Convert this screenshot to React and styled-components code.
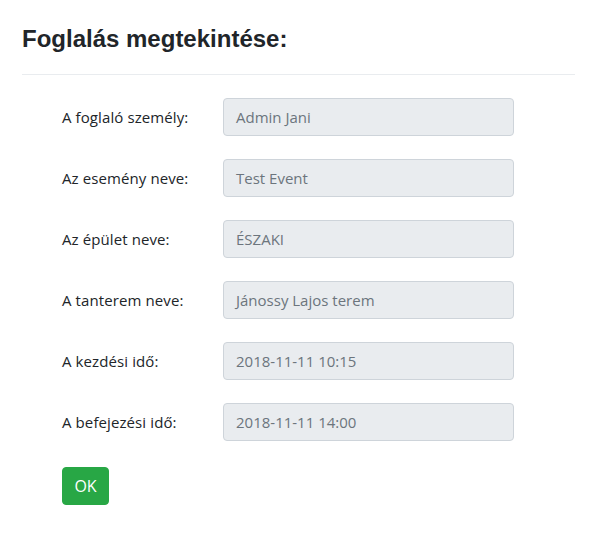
import React from "react";
import styled, { createGlobalStyle } from "styled-components";

const GlobalStyle = createGlobalStyle`
  body {
    margin: 0;
    background: #fff;
    font-family: "Open Sans", "Noto Sans", sans-serif;
    color: #212529;
  }
`;

const Page = styled.div`
  padding: 0 22px;
`;

const Title = styled.h2`
  margin: 0;
  padding-top: 26px;
  padding-bottom: 22px;
  font-family: "Liberation Sans", Arial, sans-serif;
  font-weight: 700;
  font-size: 24px;
  line-height: 26px;
  color: #212529;
  border-bottom: 1px solid #e9ecef;
`;

const Form = styled.div`
  padding: 23px 40px 0;
  display: flex;
  flex-direction: column;
  gap: 23px;
`;

const Row = styled.div`
  display: grid;
  grid-template-columns: 161px 291px;
  align-items: center;
`;

const Label = styled.label`
  font-size: 15px;
  letter-spacing: 0.1px;
  color: #212529;
`;

const Field = styled.div`
  height: 38px;
  box-sizing: border-box;
  padding: 0 12px;
  display: flex;
  align-items: center;
  background: #e9ecef;
  border: 1px solid #ced4da;
  border-radius: 4px;
  font-size: 15px;
  color: #6c757d;
`;

const Button = styled.button`
  margin-top: 3px;
  align-self: flex-start;
  height: 38px;
  width: 47px;
  padding: 0;
  border: 1px solid #28a745;
  border-radius: 4px;
  background: #28a745;
  color: #fff;
  font-family: "Open Sans", "Noto Sans", sans-serif;
  font-size: 16px;
`;

const rows = [
  ["A foglaló személy:", "Admin Jani"],
  ["Az esemény neve:", "Test Event"],
  ["Az épület neve:", "ÉSZAKI"],
  ["A tanterem neve:", "Jánossy Lajos terem"],
  ["A kezdési idő:", "2018-11-11 10:15"],
  ["A befejezési idő:", "2018-11-11 14:00"],
];

export default function App() {
  return (
    <Page>
      <GlobalStyle />
      <Title>Foglalás megtekintése:</Title>
      <Form>
        {rows.map(([label, value]) => (
          <Row key={label}>
            <Label>{label}</Label>
            <Field>{value}</Field>
          </Row>
        ))}
        <Button>OK</Button>
      </Form>
    </Page>
  );
}
